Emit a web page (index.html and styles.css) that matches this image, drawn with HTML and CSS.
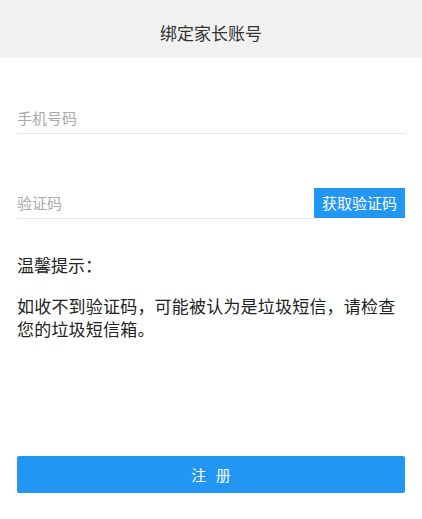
FILE: index.html
```html
<!DOCTYPE html>
<html lang="zh-CN">
<head>
<meta charset="utf-8">
<title>绑定家长账号</title>
<link rel="stylesheet" href="styles.css">
</head>
<body>
<div class="page">
  <header class="header">
    <h1 class="title">绑定家长账号</h1>
  </header>
  <main class="form">
    <div class="field field-phone">
      <span class="placeholder">手机号码</span>
    </div>
    <div class="code-row">
      <div class="field field-code">
        <span class="placeholder">验证码</span>
      </div>
      <button class="code-btn" type="button">获取验证码</button>
    </div>
    <p class="tip-title">温馨提示：</p>
    <p class="tip-text">如收不到验证码，可能被认为是垃圾短信，请检查您的垃圾短信箱。</p>
  </main>
  <div class="footer">
    <button class="submit" type="button">注 册</button>
  </div>
</div>
</body>
</html>
```
FILE: styles.css
```css
html, body {
  margin: 0;
  padding: 0;
  background: #ffffff;
}
body {
  font-family: "Noto Sans CJK SC", "Noto Sans", sans-serif;
  color: #222222;
}
.page {
  min-height: 100vh;
  display: flex;
  flex-direction: column;
}
.header {
  height: 58px;
  box-sizing: border-box;
  padding-top: 8px;
  background: #f1f1f1;
  display: flex;
  align-items: center;
  justify-content: center;
}
.title {
  margin: 0;
  font-size: 17px;
  font-weight: 400;
  color: #333333;
  line-height: 24px;
}
.form {
  padding: 0 17px;
}
.field {
  height: 30px;
  line-height: 30px;
  border-bottom: 1px solid #e8e8e8;
  font-size: 15px;
}
.placeholder {
  color: #a9a9a9;
}
.field-phone {
  margin-top: 45px;
}
.code-row {
  margin-top: 54px;
  display: flex;
  align-items: flex-end;
}
.field-code {
  flex: 1;
}
.code-btn {
  width: 91px;
  height: 30px;
  margin: 0 0 1px 0;
  padding: 0;
  border: none;
  background: #2196f3;
  color: #ffffff;
  font-family: inherit;
  font-size: 15px;
  line-height: 30px;
}
.tip-title {
  margin: 34px 0 0;
  font-size: 17px;
  line-height: 24px;
}
.tip-text {
  margin: 17px 0 0;
  font-size: 17px;
  line-height: 23px;
  letter-spacing: 0.2px;
}
.footer {
  margin-top: auto;
  padding: 0 17px 26px;
}
.submit {
  display: block;
  width: 100%;
  height: 37px;
  border: none;
  border-radius: 2px;
  background: #2196f3;
  color: #ffffff;
  font-family: inherit;
  font-size: 15px;
  letter-spacing: 3px;
  text-indent: 3px;
}
```
